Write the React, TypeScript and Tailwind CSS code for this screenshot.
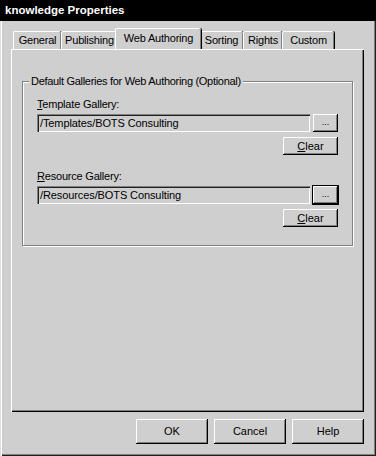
import React from "react";

const raised =
  "shadow-[inset_-1px_-1px_#000,inset_1px_1px_#fff,inset_-2px_-2px_#808080]";

function Btn({ children, className = "" }: { children: React.ReactNode; className?: string }) {
  return (
    <div
      className={`flex items-center justify-center bg-[#cfcfcf] text-black ${raised} ${className}`}
    >
      {children}
    </div>
  );
}

function Tab({
  label,
  width,
  selected = false,
}: {
  label: string;
  width: number;
  selected?: boolean;
}) {
  return (
    <div
      className={
        selected
          ? "relative z-10 -mx-[2px] flex h-[21px] items-start justify-center border-l border-t border-white bg-[#cfcfcf] pt-[3px] shadow-[inset_-1px_0_#808080,1px_0_#000] rounded-t-[2px]"
          : "flex h-[18px] items-start justify-center border-l border-t border-white bg-[#cfcfcf] pt-[2px] shadow-[inset_-1px_0_#808080,1px_0_#000] rounded-t-[2px]"
      }
      style={{ width: selected ? width + 4 : width }}
    >
      <span className="text-[11px] leading-[13px] tracking-[-0.2px]">{label}</span>
    </div>
  );
}

function Field({ mn, rest, value, focused = false }: { mn: string; rest: string; value: string; focused?: boolean }) {
  return (
    <div className="flex flex-col">
      <div className="text-[11px] leading-[13px] tracking-[-0.2px]">
        <span className="underline">{mn}</span>
        {rest}
      </div>
      <div className="mt-[3px] flex gap-[3px]">
        <div className="flex h-[18px] w-[274px] items-center bg-[#cfcfcf] pl-[3px] text-[11px] tracking-[-0.1px] shadow-[inset_1px_1px_#808080,inset_2px_2px_#202020,inset_-1px_-1px_#fff,inset_-2px_-2px_#cfcfcf]">
          {value}
        </div>
        <Btn className={`h-[18px] w-[25px] text-[9px] text-[#808080] ${focused ? "outline outline-1 outline-black" : ""}`}>
          ...
        </Btn>
      </div>
      <div className="mt-[5px] flex justify-end">
        <Btn className="h-[18px] w-[55px] text-[11px]">
          <span>
            <span className="underline">C</span>lear
          </span>
        </Btn>
      </div>
    </div>
  );
}

export default function App() {
  return (
    <div
      className="relative flex h-[456px] w-[376px] flex-col bg-[#cfcfcf] text-black shadow-[inset_1px_1px_#e0e0e0,inset_2px_2px_#fff,inset_-1px_-1px_#202020,inset_-2px_-2px_#808080]"
      style={{ fontFamily: '"Liberation Sans", Arial, sans-serif' }}
    >
      <div className="flex h-[21px] items-center bg-black pl-[5px] text-[11.5px] font-bold text-white">
        knowledge Properties
      </div>

      <div className="flex flex-1 flex-col px-[11px]">
        <div className="mt-[7px] flex h-[21px] items-end pl-[2px]">
          <Tab label="General" width={48} />
          <Tab label="Publishing" width={56} />
          <Tab label="Web Authoring" width={82} selected />
          <Tab label="Sorting" width={44} />
          <Tab label="Rights" width={39} />
          <Tab label="Custom" width={52} />
        </div>

        <div className="flex h-[363px] w-[353px] flex-col px-[11px] pt-[32px] shadow-[inset_1px_1px_#fff,inset_-1px_-1px_#000,inset_-2px_-2px_#808080]">
          <div className="relative h-[165px] w-[331px] border border-[#808080] px-[14px] pt-[16px] shadow-[1px_1px_#fff,inset_1px_1px_#fff]">
            <span className="absolute -top-[7px] left-[6px] bg-[#cfcfcf] px-[2px] text-[11px] leading-[13px] tracking-[-0.3px]">
              Default Galleries for Web Authoring (Optional)
            </span>
            <Field mn="T" rest="emplate Gallery:" value="/Templates/BOTS Consulting" />
            <div className="h-[15px]" />
            <Field mn="R" rest="esource Gallery:" value="/Resources/BOTS Consulting" focused />
          </div>
        </div>

        <div className="mt-[7px] flex justify-end gap-[6px] pr-[1px]">
          <Btn className="h-[25px] w-[72px] text-[11px]">OK</Btn>
          <Btn className="h-[25px] w-[72px] text-[11px]">Cancel</Btn>
          <Btn className="h-[25px] w-[72px] text-[11px]">Help</Btn>
        </div>
      </div>
    </div>
  );
}
